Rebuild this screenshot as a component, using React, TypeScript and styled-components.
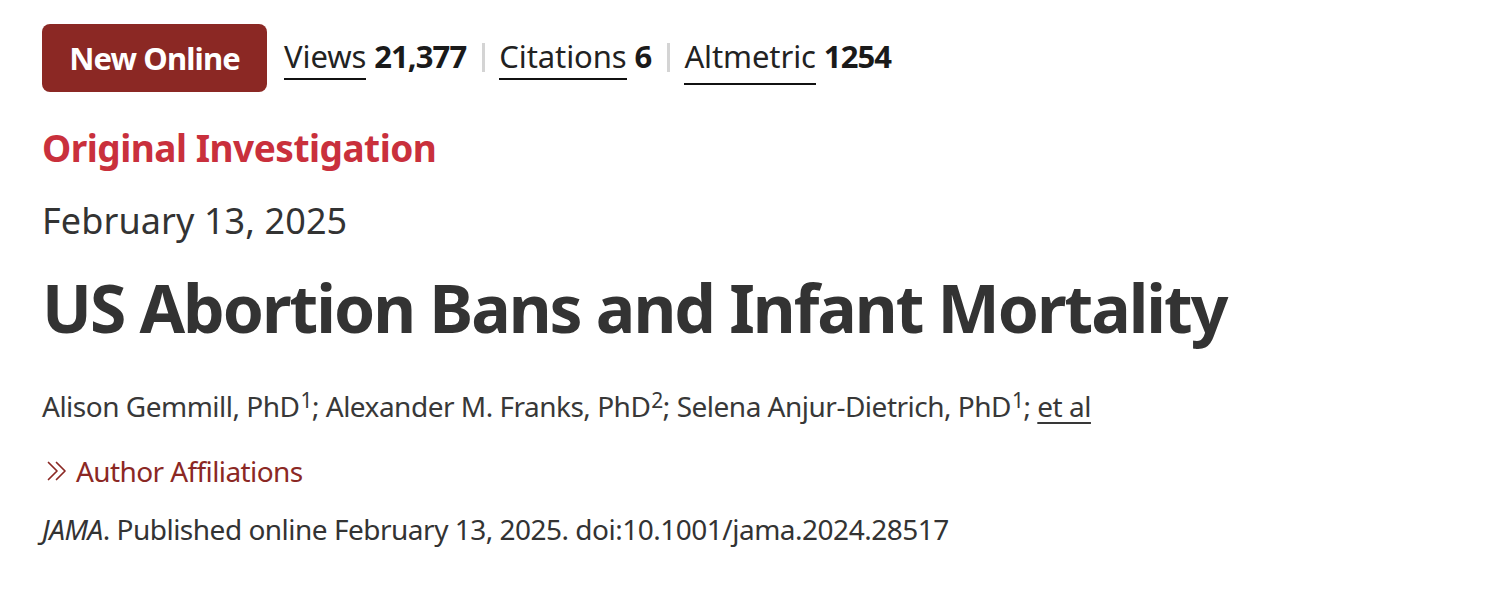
import React from "react";
import styled, { createGlobalStyle } from "styled-components";

const GlobalStyle = createGlobalStyle`
  html, body { margin: 0; padding: 0; background: #ffffff; }
  body { font-family: "Noto Sans", "Open Sans", sans-serif; color: #333333; }
`;

const Page = styled.main`
  display: flex;
  flex-direction: column;
  align-items: flex-start;
  padding: 24px 0 0 42px;
`;

const TopBar = styled.div`
  display: flex;
  align-items: flex-start;
  height: 68px;
`;

const Badge = styled.span`
  display: flex;
  align-items: center;
  justify-content: center;
  width: 225px;
  height: 68px;
  box-sizing: border-box;
  border-radius: 8px;
  background: #8b2824;
  color: #ffffff;
  font-size: 31px;
  font-weight: 700;
  letter-spacing: -0.9px;
  margin-right: 17px;
`;

const Metrics = styled.div`
  display: flex;
  align-items: flex-start;
  padding-top: 14px;
  font-size: 31px;
  line-height: 36px;
  color: #222222;
`;

const Metric = styled.span`
  display: flex;
  align-items: flex-start;
  gap: 8px;
`;

const MetricLabel = styled.a<{ $drop: number }>`
  display: inline-block;
  color: #222222;
  text-decoration: none;
  letter-spacing: -0.1px;
  border-bottom: 2px solid #111111;
  padding-bottom: ${(p) => p.$drop}px;
`;

const MetricValue = styled.b`
  font-weight: 700;
  color: #1a1a1a;
  letter-spacing: -0.9px;
`;

const Divider = styled.span`
  display: inline-block;
  width: 3px;
  height: 29px;
  margin: 5px 14px 0 16px;
  background: #d4d4d4;
`;

const Kicker = styled.div`
  margin-top: 34px;
  font-size: 37px;
  line-height: 44px;
  font-weight: 700;
  letter-spacing: -0.5px;
  color: #c9303c;
`;

const DateLine = styled.div`
  margin-top: 29px;
  font-size: 36px;
  line-height: 44px;
  letter-spacing: 0.1px;
  color: #333333;
`;

const Title = styled.h1`
  margin: 24px 0 0;
  font-size: 66px;
  line-height: 80px;
  font-weight: 700;
  letter-spacing: -2px;
  color: #333333;
`;

const Authors = styled.p`
  margin: 41px 0 0;
  font-size: 28px;
  line-height: 36px;
  letter-spacing: -0.5px;
  color: #383838;
`;

const Sup = styled.sup`
  font-size: 21px;
  line-height: 0;
  vertical-align: 0;
  position: relative;
  top: -9px;
  margin-left: 1px;
`;

const EtAl = styled.a`
  color: #383838;
  text-decoration: underline;
  text-underline-offset: 5px;
  text-decoration-thickness: 1.5px;
`;

const Affiliations = styled.button`
  margin-top: 29px;
  display: flex;
  align-items: center;
  gap: 9px;
  padding: 0 0 0 5px;
  border: 0;
  background: none;
  font-family: inherit;
  font-size: 28px;
  line-height: 36px;
  letter-spacing: -0.6px;
  color: #8b2824;
  cursor: pointer;
`;

const Citation = styled.p`
  margin: 22px 0 0;
  font-size: 28px;
  line-height: 36px;
  letter-spacing: -0.5px;
  color: #333333;
`;

const Journal = styled.i`
  font-style: italic;
`;

const ChevronIcon = () => (
  <svg width="20" height="20" viewBox="0 0 20 20" fill="none" stroke="#8b2824" strokeWidth="1.7" strokeLinecap="round" strokeLinejoin="round">
    <polyline points="1.5,1.5 10,10 1.5,18.5" />
    <polyline points="9.5,1.5 18,10 9.5,18.5" />
  </svg>
);

export default function App() {
  return (
    <>
      <GlobalStyle />
      <Page>
        <TopBar>
          <Badge>New Online</Badge>
          <Metrics>
            <Metric>
              <MetricLabel $drop={4}>Views</MetricLabel>
              <MetricValue>21,377</MetricValue>
            </Metric>
            <Divider />
            <Metric>
              <MetricLabel $drop={4}>Citations</MetricLabel>
              <MetricValue>6</MetricValue>
            </Metric>
            <Divider />
            <Metric>
              <MetricLabel $drop={9}>Altmetric</MetricLabel>
              <MetricValue>1254</MetricValue>
            </Metric>
          </Metrics>
        </TopBar>
        <Kicker>Original Investigation</Kicker>
        <DateLine>February 13, 2025</DateLine>
        <Title>US Abortion Bans and Infant Mortality</Title>
        <Authors>
          Alison Gemmill, PhD<Sup>1</Sup>; Alexander M. Franks, PhD<Sup>2</Sup>; Selena Anjur-Dietrich, PhD<Sup>1</Sup>; <EtAl>et al</EtAl>
        </Authors>
        <Affiliations>
          <ChevronIcon />
          Author Affiliations
        </Affiliations>
        <Citation>
          <Journal>JAMA</Journal>. Published online February 13, 2025. doi:10.1001/jama.2024.28517
        </Citation>
      </Page>
    </>
  );
}
